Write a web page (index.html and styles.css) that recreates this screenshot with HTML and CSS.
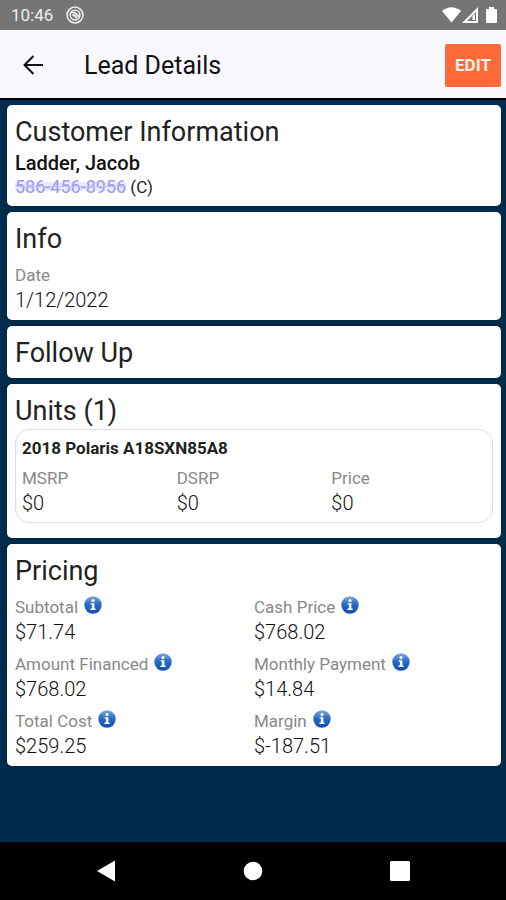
FILE: index.html
```html
<!DOCTYPE html>
<html lang="en">
<head>
<meta charset="utf-8">
<meta name="viewport" content="width=device-width, initial-scale=1">
<title>Lead Details</title>
<link rel="stylesheet" href="styles.css">
</head>
<body>
<svg class="defs" width="0" height="0" aria-hidden="true">
  <defs>
    <linearGradient id="blue" x1="0" y1="0" x2="0" y2="1">
      <stop offset="0" stop-color="#7fa9e0"/>
      <stop offset="0.45" stop-color="#2a6cc4"/>
      <stop offset="1" stop-color="#0f4fae"/>
    </linearGradient>
    <symbol id="info" viewBox="0 0 18 18">
      <circle cx="9" cy="9" r="8.7" fill="url(#blue)"/>
      <circle cx="9" cy="4.6" r="1.6" fill="#fff"/>
      <path d="M6.6 7.2h3.8v5.4h1.2v1.4H6.4v-1.400h1.500V8.600H6.600z" fill="#fff"/>
    </symbol>
  </defs>
</svg>

<div class="status">
  <span>10:46</span>
  <svg width="18" height="18" viewBox="0 0 20 20" fill="none" stroke="#eee" aria-hidden="true">
    <circle cx="10" cy="10" r="8.800" stroke-width="1.700"/>
    <circle cx="10" cy="10" r="5.400" stroke-width="1.700"/>
    <path d="M5 7.500Q10 5.500 15 13M7 10.500q3-1 5 3" stroke-width="2"/>
  </svg>
  <svg class="signals" width="56" height="18" viewBox="0 0 56 18" fill="#fff" aria-hidden="true">
    <path d="M0 5Q9.500-2.500 19 5L9.500 16.500z"/>
    <path fill-rule="evenodd" d="M20 17 36 1v16zM25 15h9V6z"/>
    <path d="M30.500 10.500 33 8v6h-2.500z"/>
    <path d="M47 1h5v2h2q1 0 1 1v12q0 1-1 1h-9q-1 0-1-1V4q0-1 1-1h2z"/>
  </svg>
</div>

<header class="appbar">
  <button class="back" type="button" aria-label="Back">
    <svg width="22" height="20" viewBox="0 0 22 20" fill="none" stroke="#111" stroke-width="2" aria-hidden="true">
      <path d="M21 10H3M11.500 1 2.500 10l9 9"/>
    </svg>
  </button>
  <h1>Lead Details</h1>
  <button class="edit" type="button">EDIT</button>
</header>

<main>
  <section class="card">
    <h2>Customer Information</h2>
    <p class="name">Ladder, Jacob</p>
    <p class="phone"><a href="tel:5864568956">586-456-8956</a> (C)</p>
  </section>

  <section class="card">
    <h2>Info</h2>
    <dl class="fields">
      <div><dt>Date</dt><dd>1/12/2022</dd></div>
    </dl>
  </section>

  <section class="card">
    <h2>Follow Up</h2>
  </section>

  <section class="card">
    <h2>Units (1)</h2>
    <article class="unit">
      <h3>2018 Polaris A18SXN85A8</h3>
      <dl class="fields three">
        <div><dt>MSRP</dt><dd>$0</dd></div>
        <div><dt>DSRP</dt><dd>$0</dd></div>
        <div><dt>Price</dt><dd>$0</dd></div>
      </dl>
    </article>
  </section>

  <section class="card">
    <h2>Pricing</h2>
    <dl class="fields two">
      <div><dt>Subtotal <button class="info" type="button" aria-label="About subtotal"><svg><use href="#info"/></svg></button></dt><dd>$71.74</dd></div>
      <div><dt>Cash Price <button class="info" type="button" aria-label="About cash price"><svg><use href="#info"/></svg></button></dt><dd>$768.02</dd></div>
      <div><dt>Amount Financed <button class="info" type="button" aria-label="About amount financed"><svg><use href="#info"/></svg></button></dt><dd>$768.02</dd></div>
      <div><dt>Monthly Payment <button class="info" type="button" aria-label="About monthly payment"><svg><use href="#info"/></svg></button></dt><dd>$14.84</dd></div>
      <div><dt>Total Cost <button class="info" type="button" aria-label="About total cost"><svg><use href="#info"/></svg></button></dt><dd>$259.25</dd></div>
      <div><dt>Margin <button class="info" type="button" aria-label="About margin"><svg><use href="#info"/></svg></button></dt><dd>$-187.51</dd></div>
    </dl>
  </section>
</main>

<nav class="navbar" aria-label="System">
  <button type="button" aria-label="Back"><svg width="20" height="22" viewBox="0 0 20 22" fill="#fff"><path d="M1 11 19 .5v21z"/></svg></button>
  <button type="button" aria-label="Home"><svg width="20" height="20" viewBox="0 0 20 20" fill="#fff"><circle cx="10" cy="10" r="9.300"/></svg></button>
  <button type="button" aria-label="Recent apps"><svg width="20" height="20" viewBox="0 0 20 20" fill="#fff"><rect width="20" height="20" rx="1.500"/></svg></button>
</nav>
</body>
</html>
```
FILE: styles.css
```css
* {
  box-sizing: border-box;
}

body {
  margin: 0;
  min-height: 100vh;
  display: flex;
  flex-direction: column;
  background: #002b4a;
  color: #222;
  font-family: Roboto, "Liberation Sans", sans-serif;
  font-size: 20px;
}

h1, h2, h3, p, dl, dd {
  margin: 0;
}

button {
  padding: 0;
  border: 0;
  background: none;
  font-family: inherit;
  cursor: pointer;
}

svg {
  display: block;
}

.defs {
  position: absolute;
}

.status {
  display: flex;
  align-items: center;
  gap: 13px;
  height: 30px;
  padding: 0 8px 0 11px;
  background: #757575;
  color: #eee;
  font-size: 17px;
}

.signals {
  margin-left: auto;
}

.appbar {
  display: flex;
  align-items: center;
  height: 70px;
  padding: 2px 5px 0 22px;
  background: #f8f8fe;
  border-bottom: 2px solid #000;
}

.back {
  width: 62px;
}

h1 {
  flex: 1;
  font-size: 25px;
  font-weight: 400;
  color: #111;
}

.edit {
  width: 56px;
  height: 43px;
  border-radius: 2px;
  background: #ff6a39;
  color: #fff0ea;
  font-size: 17px;
  font-weight: 700;
}

main {
  flex: 1;
  display: flex;
  flex-direction: column;
  gap: 6px;
  padding: 5px 5px 6px 7px;
}

.card {
  padding: 9px 8px 7px;
  border-radius: 5px;
  background: #fff;
}

h2 {
  font-size: 27px;
  font-weight: 400;
  line-height: 36px;
}

.name {
  margin-top: 1px;
  line-height: 24px;
  font-weight: 500;
  color: #111;
}

.phone {
  font-size: 17px;
  font-weight: 400;
  line-height: 24px;
}

.phone a {
  background: linear-gradient(#ebe9ff, #ebe9ff) center / 100% 9px no-repeat;
  color: #9c98f2;
  font-size: 18px;
  text-decoration: line-through #c4c0fa;
}

.fields {
  display: grid;
  row-gap: 7px;
  margin-top: 6px;
}

.two {
  grid-template-columns: repeat(2, 1fr);
}

.three {
  grid-template-columns: repeat(3, 1fr);
}

dt {
  display: flex;
  gap: 6px;
  font-size: 17px;
  line-height: 24px;
  color: #888;
}

dd {
  font-weight: 300;
  line-height: 26px;
  color: #111;
}

.info {
  padding-top: 1px;
  height: 19px;
}

.info svg {
  width: 18px;
  height: 18px;
}

.unit {
  margin-bottom: 8px;
  padding: 6px;
  border: 1px solid #ddd;
  border-radius: 14px;
}

h3 {
  font-size: 17px;
  font-weight: 700;
  line-height: 24px;
}

.navbar {
  display: flex;
  align-items: center;
  justify-content: space-between;
  height: 58px;
  padding: 0 96px;
  background: #000;
}
```
